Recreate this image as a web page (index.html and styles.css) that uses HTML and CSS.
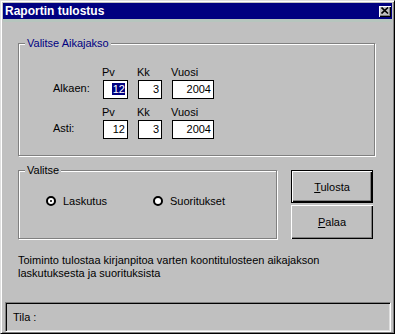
FILE: index.html
```html
<!DOCTYPE html>
<html>
<head>
  <meta charset="UTF-8">
  <title>Raportin tulostus</title>
  <link rel="stylesheet" href="styles.css">
</head>
<body>
  <div class="window">
    <div class="titlebar">
      <span class="title">Raportin tulostus</span>
      <span class="close">
        <svg width="8" height="7" viewBox="0 0 8 7"><path d="M0.5 0.5 L7 6.5 M7 0.5 L0.5 6.5" stroke="#000" stroke-width="1.6" fill="none"/></svg>
      </span>
    </div>
    <div class="strip"></div>

    <div class="content">
      <fieldset class="group period">
        <legend>Valitse Aikajakso</legend>
        <div class="dates">
          <span></span>
          <span class="head">Pv</span>
          <span class="head">Kk</span>
          <span class="head">Vuosi</span>

          <span class="label">Alkaen:</span>
          <span class="box"><span class="sel">12</span></span>
          <span class="box">3</span>
          <span class="box">2004</span>

          <span></span>
          <span class="head">Pv</span>
          <span class="head">Kk</span>
          <span class="head">Vuosi</span>

          <span class="label">Asti:</span>
          <span class="box">12</span>
          <span class="box">3</span>
          <span class="box">2004</span>
        </div>
      </fieldset>

      <div class="row">
        <fieldset class="group choice">
          <legend>Valitse</legend>
          <div class="radios">
            <label class="opt first"><span class="radio checked"></span>Laskutus</label>
            <label class="opt"><span class="radio"></span>Suoritukset</label>
          </div>
        </fieldset>
        <div class="buttons">
          <button class="btn default"><u>T</u>ulosta</button>
          <button class="btn"><u>P</u>alaa</button>
        </div>
      </div>

      <p class="info">Toiminto tulostaa kirjanpitoa varten koontitulosteen aikajakson<br>laskutuksesta ja suorituksista</p>
    </div>

    <div class="status">Tila :</div>
  </div>
</body>
</html>
```

FILE: styles.css
```css
body {
  margin: 0;
  font-family: "Liberation Sans", Arial, sans-serif;
  font-size: 11px;
  color: #000;
}

.window {
  width: 395px;
  height: 334px;
  box-sizing: border-box;
  display: flex;
  flex-direction: column;
  background: #c0c0c0;
  border: 1px solid;
  border-color: #dfdfdf #000 #000 #dfdfdf;
  box-shadow: inset 1px 1px 0 #fff, inset -1px -1px 0 #808080;
  padding: 2px 2px 1px 2px;
}

.titlebar {
  height: 16px;
  background: #000080;
  display: flex;
  align-items: center;
  justify-content: space-between;
  padding: 0 1px 0 2px;
}

.title {
  color: #fff;
  font-weight: bold;
  font-size: 12px;
  line-height: 16px;
}

.close {
  width: 12px;
  height: 11px;
  box-sizing: border-box;
  background: #c0c0c0;
  box-shadow: inset 1px 1px 0 #fff, inset -1px -1px 0 #000, inset -2px -2px 0 #808080;
  display: flex;
  align-items: center;
  justify-content: center;
  padding: 0 1px 1px 0;
}

.close svg {
  display: block;
}

.strip {
  height: 3px;
  background: #b6c6be;
}

.content {
  flex: 1;
  padding-left: 15px;
}

.group {
  margin: 0;
  padding: 0;
  min-width: 0;
  border: 1px solid #808080;
  box-shadow: inset 1px 1px 0 #fff, 1px 1px 0 #fff;
}

.group legend {
  margin-left: 6px;
  padding: 0 2px;
  line-height: 15px;
  background: #c0c0c0;
}

.period {
  width: 357px;
  box-sizing: border-box;
  margin-top: 14px;
  padding-bottom: 16px;
}

.period legend {
  color: #000080;
}

.dates {
  display: grid;
  grid-template-columns: 40px 25px 24px 42px;
  grid-template-rows: 14px 19px 21px 19px;
  column-gap: 10px;
  margin: 15px 0 0 34px;
}

.head {
  align-self: end;
  line-height: 13px;
  padding-bottom: 1px;
  margin-left: -1px;
}

.label {
  align-self: center;
  line-height: 13px;
  padding-bottom: 3px;
}

.box {
  box-sizing: border-box;
  border: 1px solid #000;
  background: #fff;
  text-align: right;
  padding-right: 2px;
  line-height: 17px;
}

.sel {
  background: #000080;
  color: #fff;
  padding: 0 0 0 1px;
}

.row {
  display: flex;
  align-items: flex-start;
  margin-top: 7px;
}

.choice {
  width: 259px;
  box-sizing: border-box;
  padding-bottom: 30px;
}

.radios {
  display: flex;
  margin: 16px 0 0 27px;
  line-height: 14px;
}

.opt {
  display: flex;
  align-items: center;
  gap: 7px;
}

.opt.first {
  width: 107px;
}

.radio {
  width: 10px;
  height: 10px;
  box-sizing: border-box;
  border: 2px solid #000;
  border-radius: 50%;
  background: #fff;
  display: flex;
  align-items: center;
  justify-content: center;
}

.radio.checked::after {
  content: "";
  width: 2px;
  height: 2px;
  background: #000;
  border-radius: 50%;
}

.buttons {
  display: flex;
  flex-direction: column;
  gap: 2px;
  margin: 7px 0 0 14px;
}

.btn {
  width: 82px;
  height: 34px;
  box-sizing: border-box;
  font-family: inherit;
  font-size: 11px;
  color: #000;
  background: #c0c0c0;
  border: none;
  padding: 0;
  box-shadow: inset 1px 1px 0 #fff, inset -1px -1px 0 #000, inset -2px -2px 0 #808080;
}

.btn.default {
  height: 33px;
  border: 1px solid #000;
}

.info {
  margin: 15px 0 0;
  line-height: 13px;
}

.status {
  height: 30px;
  box-sizing: border-box;
  margin: 0 1px 0 2px;
  border: 1px solid;
  border-color: #808080 #fff #fff #808080;
  box-shadow: inset 1px 1px 0 #000, inset -1px -1px 0 #dfdfdf;
  display: flex;
  align-items: center;
  padding: 0 0 1px 7px;
}
```
